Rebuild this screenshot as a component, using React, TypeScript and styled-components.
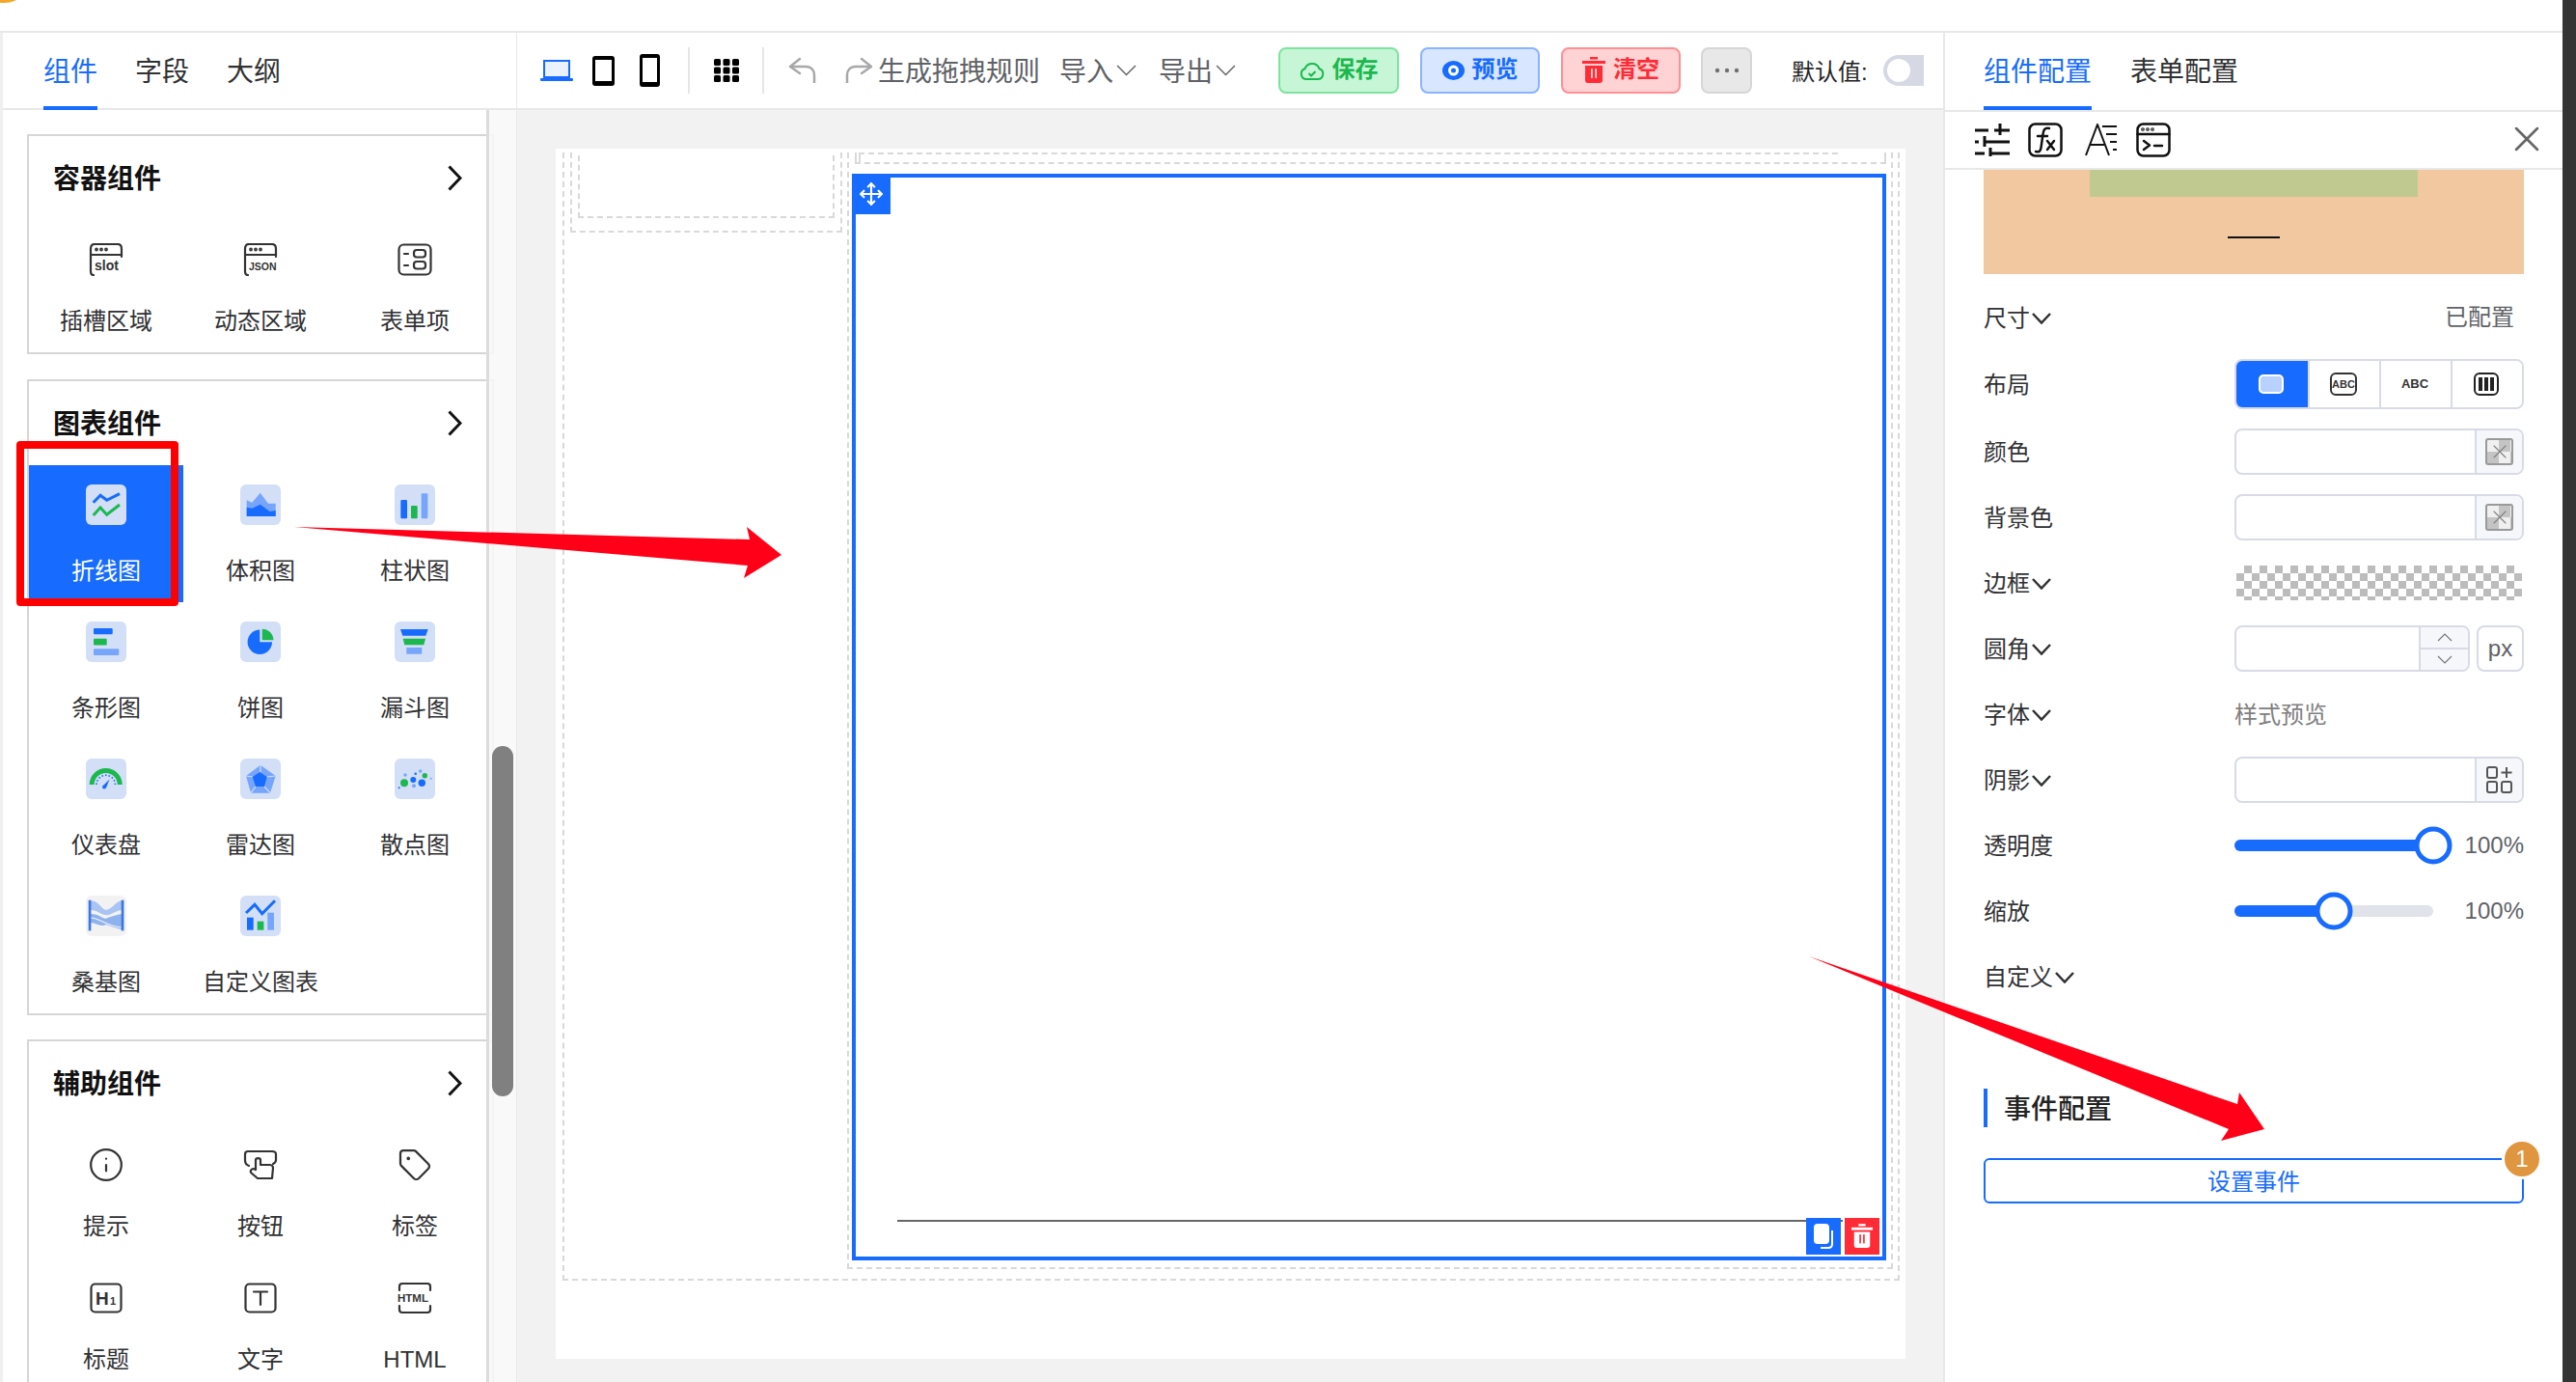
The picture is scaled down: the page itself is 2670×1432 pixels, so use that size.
import type { ReactNode } from 'react'
import styled, { createGlobalStyle } from 'styled-components'
import { Info, Move, Tag, X } from 'lucide-react'

const BLUE = '#176cff'
const GREEN = '#1cb84f'
const LIGHT = '#76a5fb'
const LINE = '#e8e8e8'
const INK = '#303133'

const GlobalStyle = createGlobalStyle`
  html, body {
    margin: 0;
    padding: 0;
    background: #fff;
  }
  * {
    box-sizing: border-box;
  }
  body {
    font-family: "Liberation Sans", "Noto Sans CJK SC", sans-serif;
    color: ${INK};
  }
`

const Tile = ({ children, $bg = '#d3dff6' }: { children: ReactNode; $bg?: string }) => (
  <svg width="42" height="42" viewBox="0 0 42 42">
    <rect width="42" height="42" rx="6" fill={$bg} />
    {children}
  </svg>
)

const LineChartIcon = () => (
  <Tile>
    <g fill="none" strokeWidth="3">
      <polyline points="7.7,18.7 15,11.3 21.7,16.3 35,9.7" stroke={BLUE} />
      <polyline points="7.7,32 15,24 21.7,31.3 35,21" stroke={GREEN} />
    </g>
  </Tile>
)

const AreaIcon = () => (
  <Tile>
    <polygon points="6.7,16.3 12.3,18.7 20.7,8.7 29,19.7 36.7,19.7 36.7,33 6.7,33" fill={LIGHT} />
    <polygon points="6.7,23.7 12.3,24.7 20.7,20.7 30.7,28 36.7,27 36.7,33 6.7,33" fill={BLUE} />
  </Tile>
)

const BarIcon = () => (
  <Tile>
    <rect x="6.3" y="16" width="6.7" height="19.3" rx="1" fill={BLUE} />
    <rect x="17" y="22" width="6.7" height="13.3" rx="1" fill={GREEN} />
    <rect x="27.7" y="9.3" width="6.7" height="26" rx="1" fill={LIGHT} />
  </Tile>
)

const HBarIcon = () => (
  <Tile>
    <rect x="8" y="7" width="19.7" height="6.3" rx="1" fill={BLUE} />
    <rect x="8" y="17.7" width="13.7" height="6.7" rx="1" fill={GREEN} />
    <rect x="8" y="28.3" width="26.3" height="6.7" rx="1" fill={LIGHT} />
  </Tile>
)

const PieIcon = () => (
  <Tile>
    <path d="M20.3 21.3V8.6A12.7 12.7 0 1 0 33 21.3Z" fill={BLUE} />
    <path d="M22.7 7.7A11.7 11.7 0 0 1 34.4 19.3H22.7Z" fill={GREEN} />
  </Tile>
)

const FunnelIcon = () => (
  <Tile>
    <polygon points="6,8 34.7,8 32.3,14.7 8.3,14.7" fill={BLUE} />
    <polygon points="8.7,17.7 32,17.7 30.3,24.3 10.3,24.3" fill={GREEN} />
    <rect x="12.3" y="27" width="16" height="6.7" fill={LIGHT} />
  </Tile>
)

const GaugeIcon = () => (
  <Tile>
    <path d="M6.2 27A14.5 14.5 0 0 1 35.2 27" fill="none" stroke={GREEN} strokeWidth="5" />
    <path d="M11 27A9.7 9.7 0 0 1 30.4 27" fill="none" stroke={BLUE} strokeWidth="1.6" strokeDasharray="1.6 2" />
    <path d="M24.5 21.5L21 30.5L18 28Z" fill={BLUE} />
    <circle cx="19" cy="29.5" r="2" fill={BLUE} />
  </Tile>
)

const RadarIcon = () => (
  <Tile>
    <polygon points="21,6.7 36.7,18 31,35.7 11,35.7 6,18" fill={LIGHT} />
    <g stroke="#d3dff6" strokeWidth="1.2">
      <line x1="21" y1="6.7" x2="21" y2="14" />
      <line x1="36.7" y1="18" x2="27.7" y2="19" />
      <line x1="31" y1="35.7" x2="25" y2="29" />
      <line x1="11" y1="35.7" x2="16" y2="29" />
      <line x1="6" y1="18" x2="12.7" y2="19" />
    </g>
    <polygon points="20.3,14 27.7,19 25,29 16,29 12.7,19" fill={BLUE} />
  </Tile>
)

const ScatterIcon = () => (
  <Tile>
    <circle cx="10" cy="25.3" r="4" fill={GREEN} />
    <circle cx="19.3" cy="22" r="3" fill={BLUE} />
    <circle cx="28.3" cy="25.3" r="3.7" fill={BLUE} />
    <circle cx="31.3" cy="17.7" r="2.7" fill={GREEN} />
    <circle cx="20" cy="28.3" r="2" fill={LIGHT} />
    <circle cx="26.7" cy="13" r="1.7" fill={LIGHT} />
    <circle cx="21.7" cy="15.7" r="1.3" fill={BLUE} />
    <circle cx="11" cy="17" r="1.7" fill={LIGHT} />
    <circle cx="4.7" cy="30.3" r="1" fill={BLUE} />
    <circle cx="37.7" cy="20.7" r="1" fill={LIGHT} />
  </Tile>
)

const SankeyIcon = () => (
  <Tile $bg="#f2f2f2">
    <path d="M5 5C14 6 16 14 21 15C27 14 30 7 37 5V15C29 16 26 21 20 20C14 19 12 15 5 15Z" fill="#a9c3f2" />
    <path d="M5 19C12 19 15 22 20 24C25 22 31 20 37 19V35C28 33 25 31 21 30C15 33 10 28 5 28Z" fill="#8fb2ee" />
    <path d="M5 23C14 23 22 32 37 33" fill="none" stroke="#f2f2f2" strokeWidth="1.2" />
    <rect x="2.7" y="4.7" width="2.7" height="31.7" fill="#3b78e6" />
    <rect x="36.7" y="4.7" width="2.7" height="31.7" fill="#3b78e6" />
  </Tile>
)

const CustomChartIcon = () => (
  <Tile>
    <polyline points="6,18 15,9.3 22.7,18.7 36,5.3" fill="none" stroke={BLUE} strokeWidth="3" />
    <rect x="7" y="22.7" width="6.7" height="13" fill={BLUE} />
    <rect x="17.7" y="26.7" width="6.7" height="9" fill={GREEN} />
    <rect x="28.3" y="17.7" width="6.7" height="18" fill={LIGHT} />
  </Tile>
)

const Stroke = styled.svg`
  display: block;
  fill: none;
  stroke: #333;
  stroke-width: 2.2;
  stroke-linecap: round;
  stroke-linejoin: round;
  flex: none;
`

const IconText = styled.text<{ $size: number; $weight?: number }>`
  font-family: "Liberation Sans", sans-serif;
  font-size: ${(p) => p.$size}px;
  font-weight: ${(p) => p.$weight ?? 700};
  fill: #333;
  stroke: none;
`

const WindowIcon = ({ word, size }: { word: string; size: number }) => (
  <Stroke width="36" height="34" viewBox="0 0 36 34">
    <path d="M5 33C3 33 2 31 2 29V6C2 3 3 1 6 1H30C33 1 34 3 34 6V14" />
    <line x1="2" y1="12" x2="34" y2="12" />
    <circle cx="8" cy="6.5" r=".8" />
    <circle cx="13" cy="6.5" r=".8" />
    <circle cx="18" cy="6.5" r=".8" />
    <IconText x="6" y="28" $size={size}>
      {word}
    </IconText>
  </Stroke>
)

const FormIcon = () => (
  <Stroke width="36" height="34" viewBox="0 0 36 34">
    <rect x="1.5" y="1.5" width="33" height="31" rx="5" />
    <line x1="7" y1="11" x2="11" y2="11" />
    <line x1="7" y1="23" x2="11" y2="23" />
    <rect x="17" y="7" width="12" height="7.5" rx="3" />
    <rect x="17" y="19" width="12" height="7.5" rx="3" />
  </Stroke>
)

const PressIcon = () => (
  <Stroke width="36" height="34" viewBox="0 0 36 34">
    <path d="M6 18C3 17 2 15 2 12V6C2 4 3 3 5 3H30C32 3 34 4 34 6V12C34 14 33 15 31 16" />
    <path d="M13 22V12C13 9.5 18 9.5 18 12V17H28C30 17 31 19 31 20L30 31H15L8 25C7 22 10 20 13 22Z" />
  </Stroke>
)

const HeadingIcon = () => (
  <Stroke width="34" height="32" viewBox="0 0 34 32">
    <rect x="1.5" y="1.5" width="31" height="29" rx="4" />
    <IconText x="6" y="23" $size={19}>
      H
    </IconText>
    <IconText x="21" y="23" $size={11}>
      1
    </IconText>
  </Stroke>
)

const TextIcon = () => (
  <Stroke width="34" height="32" viewBox="0 0 34 32">
    <rect x="1.5" y="1.5" width="31" height="29" rx="4" />
    <path d="M10 9.5H24M17 9.5V23" />
  </Stroke>
)

const HtmlIcon = () => (
  <Stroke width="36" height="34" viewBox="0 0 36 34">
    <path d="M2 9V5C2 3 3 2 5 2H31C33 2 34 3 34 5V9" />
    <path d="M2 25V29C2 31 3 32 5 32H31C33 32 34 31 34 29V25" />
    <IconText x="0" y="21" $size={11.5}>
      HTML
    </IconText>
  </Stroke>
)

const Chevron = styled.svg`
  display: block;
  flex: none;
  fill: none;
  stroke: ${(p) => p.color || INK};
`

const DownArrow = ({ width = 20, thin = false }: { width?: number; thin?: boolean }) => (
  <Chevron width={width} height="12" viewBox="0 0 20 12" preserveAspectRatio="none" color={thin ? '#606266' : INK} strokeWidth={thin ? 1.3 : 2.5}>
    <polyline points="1,1 10,10.5 19,1" />
  </Chevron>
)

const Page = styled.div`
  position: relative;
  display: flex;
  width: 2670px;
  height: 1432px;
  overflow: hidden;
  background: #fff;
`

const Main = styled.div`
  display: flex;
  flex-direction: column;
  width: 2656px;
  height: 100%;
`

const DarkEdge = styled.div`
  width: 14px;
  background: #343434;
`

const TopStrip = styled.div`
  position: relative;
  height: 34px;
  flex: none;
  background: #fff;
  border-bottom: 2px solid ${LINE};
`

const CornerBlob = styled.div`
  position: absolute;
  left: -12px;
  top: -12px;
  width: 32px;
  height: 15px;
  border-radius: 50%;
  background: #f5a623;
`

const Workspace = styled.div`
  display: flex;
  flex: 1;
  min-height: 0;
`

const LeftPanel = styled.aside`
  display: flex;
  flex-direction: column;
  width: 536px;
  flex: none;
  border-left: 3px solid #efefef;
  border-right: 1px solid ${LINE};
  background: #fff;
`

const TabBar = styled.div<{ $gap: number; $pad: number; $h: number }>`
  display: flex;
  gap: ${(p) => p.$gap}px;
  height: ${(p) => p.$h}px;
  padding-left: ${(p) => p.$pad}px;
  flex: none;
  border-bottom: 2px solid ${LINE};
`

const TabItem = styled.div<{ $active?: boolean; $h: number }>`
  height: ${(p) => p.$h}px;
  line-height: 81px;
  font-size: 28px;
  color: ${(p) => (p.$active ? BLUE : INK)};
  border-bottom: 4px solid ${(p) => (p.$active ? BLUE : 'transparent')};
`

const Palette = styled.div`
  position: relative;
  flex: 1;
  min-height: 0;
  overflow: hidden;
  padding: 25px 0 0 25px;
`

const PaletteCard = styled.section<{ $mb: number }>`
  width: 484px;
  margin-bottom: ${(p) => p.$mb}px;
  border: 2px solid #d6d6d6;
`

const CardHead = styled.div`
  display: flex;
  align-items: center;
  justify-content: space-between;
  height: 86px;
  padding: 0 31px 0 25px;
  font-size: 28px;
  line-height: 34px;
  font-weight: 700;
  color: #111;
`

const CardTitle = styled.span`
  padding-top: 3px;
`

const CardChevron = () => (
  <Chevron width="15" height="27" viewBox="0 0 15 27" color="#111" strokeWidth="3">
    <polyline points="1.5,1.5 13,13.5 1.5,25.5" />
  </Chevron>
)

const ItemGrid = styled.div<{ $top?: number }>`
  display: grid;
  grid-template-columns: repeat(3, 160px);
  margin-top: ${(p) => p.$top ?? 0}px;
`

const PaletteItem = styled.div<{ $pad: number; $gap: number; $active?: boolean }>`
  display: flex;
  flex-direction: column;
  align-items: center;
  padding: ${(p) => p.$pad}px 0 15px;
  gap: ${(p) => p.$gap}px;
  background: ${(p) => (p.$active ? BLUE : 'transparent')};
  color: ${(p) => (p.$active ? '#fff' : INK)};
`

const ItemIcon = styled.div`
  display: flex;
  align-items: center;
  justify-content: center;
  height: 42px;
`

const ItemLabel = styled.div`
  font-size: 24px;
  line-height: 34px;
  white-space: nowrap;
`

const ScrollTrack = styled.div`
  position: absolute;
  top: 0;
  bottom: 0;
  right: 0;
  width: 31px;
  background: rgba(248, 248, 248, 0.88);
  border-left: 3px solid #dcdcdc;
`

const ScrollThumb = styled.div`
  position: absolute;
  top: 659px;
  left: 3px;
  width: 22px;
  height: 363px;
  border-radius: 11px;
  background: #808080;
`

const Center = styled.main`
  display: flex;
  flex-direction: column;
  width: 1478px;
  flex: none;
  background: #f2f2f2;
`

const Toolbar = styled.div`
  display: flex;
  align-items: center;
  height: 80px;
  flex: none;
  background: #fff;
  border-bottom: 2px solid ${LINE};
  font-size: 28px;
  color: #606266;
`

const Slot = styled.div<{ $gap: number }>`
  display: flex;
  align-items: center;
  margin-left: ${(p) => p.$gap}px;
  flex: none;
`

const ToolDivider = styled.div<{ $gap: number }>`
  width: 2px;
  height: 48px;
  margin-left: ${(p) => p.$gap}px;
  background: #e6e6e6;
  flex: none;
`

const ToolText = styled.span`
  padding-top: 3px;
  line-height: 40px;
  white-space: nowrap;
`

const ActionButton = styled.div<{ $bg: string; $line: string; $fg: string; $width: number }>`
  display: flex;
  align-items: center;
  justify-content: center;
  gap: 8px;
  width: ${(p) => p.$width}px;
  height: 48px;
  border: 2px solid ${(p) => p.$line};
  border-radius: 8px;
  background: ${(p) => p.$bg};
  color: ${(p) => p.$fg};
  font-size: 24px;
  font-weight: 600;
`

const ActionLabel = styled.span`
  padding-bottom: 3px;
  line-height: 34px;
`

const DefaultLabel = styled.span`
  padding-top: 3px;
  font-size: 24px;
  line-height: 34px;
  color: #222;
  white-space: nowrap;
`

const Toggle = styled.div`
  display: flex;
  align-items: center;
  width: 42px;
  height: 32px;
  padding-left: 4px;
  border-radius: 16px 0 0 16px;
  background: #d6d9e4;
`

const ToggleKnob = styled.div`
  width: 24px;
  height: 24px;
  border-radius: 50%;
  background: #fff;
`

const Stage = styled.div`
  flex: 1;
  min-height: 0;
  padding: 40px 0 0 40px;
`

const Sheet = styled.div`
  width: 1399px;
  height: 1254px;
  padding: 4px 6px 0 7px;
  background: #fff;
`

const DASH = '2px dashed #d9d9d9'

const OuterZone = styled.div`
  display: flex;
  align-items: flex-start;
  height: 1169px;
  padding-left: 6px;
  border-left: ${DASH};
  border-right: ${DASH};
  border-bottom: ${DASH};
`

const SideZone = styled.div`
  width: 282px;
  height: 83px;
  padding: 3px 6px 0;
  flex: none;
  border-left: ${DASH};
  border-right: ${DASH};
  border-bottom: ${DASH};
`

const SideInner = styled.div`
  height: 65px;
  border-left: ${DASH};
  border-right: ${DASH};
  border-bottom: ${DASH};
`

const BodyZone = styled.div`
  width: 1084px;
  height: 1157px;
  margin-left: 5px;
  flex: none;
  border-left: ${DASH};
  border-right: ${DASH};
  border-bottom: ${DASH};
`

const TopSlot = styled.div`
  width: 1069px;
  height: 12px;
  margin-left: 6px;
  border-left: ${DASH};
  border-right: ${DASH};
  border-bottom: ${DASH};
`

const TopSlotInner = styled.div`
  width: 1015px;
  height: 10px;
  margin-left: 2px;
  border-left: ${DASH};
  border-top: ${DASH};
`

const SelectedWidget = styled.div`
  position: relative;
  display: flex;
  flex-direction: column;
  justify-content: flex-end;
  width: 1072px;
  height: 1126px;
  margin: 10px 0 0 3px;
  border: 4px solid ${BLUE};
`

const WidgetRule = styled.div`
  width: 980px;
  height: 2px;
  margin: 0 0 36px 43px;
  background: #666;
`

const MoveHandle = styled.div`
  position: absolute;
  left: -4px;
  top: -4px;
  display: flex;
  align-items: center;
  justify-content: center;
  width: 40px;
  height: 42px;
  background: ${BLUE};
`

const WidgetAction = styled.div<{ $right: number; $bg: string }>`
  position: absolute;
  right: ${(p) => p.$right}px;
  bottom: 2px;
  display: flex;
  align-items: center;
  justify-content: center;
  width: 36px;
  height: 38px;
  background: ${(p) => p.$bg};
`

const RightPanel = styled.aside`
  display: flex;
  flex-direction: column;
  width: 642px;
  flex: none;
  border-left: 2px solid ${LINE};
  background: #fff;
`

const ConfigIcons = styled.div`
  display: flex;
  align-items: center;
  height: 60px;
  padding: 0 15px 0 31px;
  flex: none;
  border-bottom: 2px solid ${LINE};
`

const ConfigIconSlot = styled.div<{ $gap?: number }>`
  margin-left: ${(p) => p.$gap ?? 0}px;
`

const CloseSlot = styled.div`
  display: flex;
  margin: -3px 0 0 auto;
  color: #666;
`

const ConfigBody = styled.div`
  flex: 1;
  min-height: 0;
  padding: 0 40px;
`

const BoxPreview = styled.div`
  display: flex;
  flex-direction: column;
  align-items: center;
  height: 108px;
  margin-bottom: 11px;
  background: #f1c8a0;
`

const BoxPreviewInner = styled.div`
  width: 340px;
  height: 28px;
  background: #c0c98f;
`

const BoxPreviewLine = styled.div`
  width: 54px;
  height: 2px;
  margin-top: 41px;
  background: #111;
`

const Row = styled.div<{ $mt?: number }>`
  display: flex;
  align-items: center;
  height: 68px;
  margin-top: ${(p) => p.$mt ?? 0}px;
`

const RowLabel = styled.div`
  display: flex;
  align-items: center;
  gap: 2px;
  width: 260px;
  padding-top: 1px;
  flex: none;
  font-size: 24px;
  line-height: 34px;
  color: ${INK};
`

const RowControl = styled.div`
  display: flex;
  align-items: center;
  width: 300px;
  font-size: 24px;
  line-height: 34px;
`

const HintRight = styled.div`
  width: 100%;
  padding-right: 10px;
  text-align: right;
  color: #606266;
`

const HintLeft = styled.div`
  padding-top: 2px;
  color: #808080;
`

const Segmented = styled.div`
  display: grid;
  grid-template-columns: repeat(4, 1fr);
  width: 100%;
  height: 52px;
  border: 2px solid #d8dbe6;
  border-radius: 8px;
  overflow: hidden;
`

const SegmentCell = styled.div<{ $active?: boolean }>`
  display: flex;
  align-items: center;
  justify-content: center;
  padding-right: 3px;
  background: ${(p) => (p.$active ? BLUE : '#fff')};
  border-left: 2px solid ${(p) => (p.$active ? BLUE : '#d8dbe6')};
  &:first-child {
    border-left: none;
  }
`

const InputBox = styled.div<{ $width?: number }>`
  display: flex;
  justify-content: flex-end;
  width: ${(p) => p.$width ?? 300}px;
  height: 48px;
  border: 2px solid #d8dbe6;
  border-radius: 8px;
  overflow: hidden;
  flex: none;
`

const InputAddon = styled.div<{ $width: number }>`
  display: flex;
  flex-direction: column;
  align-items: center;
  justify-content: center;
  width: ${(p) => p.$width}px;
  background: #f5f7fa;
  border-left: 2px solid #d8dbe6;
`

const StepperHalf = styled.div`
  display: flex;
  flex: 1;
  align-items: center;
  justify-content: center;
  width: 100%;
  & + & {
    border-top: 2px solid #d8dbe6;
  }
`

const UnitBox = styled.div`
  display: flex;
  align-items: center;
  justify-content: center;
  width: 49px;
  height: 48px;
  margin-left: 7px;
  border: 2px solid #d8dbe6;
  border-radius: 8px;
  color: #606266;
`

const Checker = styled.div`
  width: 296px;
  height: 36px;
  margin-left: 2px;
  background: repeating-conic-gradient(#bcbcbc 0 25%, #fff 0 50%) 0 0 / 16px 16px;
`

const Swatch = styled.div`
  display: flex;
  align-items: center;
  justify-content: center;
  width: 29px;
  height: 28px;
  border: 2px solid #9a9a9a;
  border-radius: 3px;
  background: repeating-conic-gradient(#c4c4c4 0 25%, #f0f0f0 0 50%) 0 0 / 24px 24px;
  color: #808080;
`

const SliderTrack = styled.div`
  position: relative;
  width: 206px;
  height: 12px;
  border-radius: 6px;
  background: #e0e3ea;
  flex: none;
`

const SliderFill = styled.div<{ $value: number }>`
  width: ${(p) => p.$value}%;
  height: 100%;
  border-radius: 6px;
  background: ${BLUE};
`

const SliderThumb = styled.div<{ $value: number }>`
  position: absolute;
  left: ${(p) => p.$value}%;
  top: 50%;
  width: 39px;
  height: 39px;
  transform: translate(-50%, -50%);
  border: 5px solid ${BLUE};
  border-radius: 50%;
  background: #fff;
`

const SliderValue = styled.div`
  margin-left: auto;
  color: #606266;
`

const EventTitle = styled.div`
  height: 40px;
  margin-top: 82px;
  padding-left: 17px;
  border-left: 4px solid ${BLUE};
  font-size: 28px;
  line-height: 43px;
  font-weight: 500;
  color: #222;
`

const EventButton = styled.div`
  position: relative;
  height: 47px;
  margin-top: 32px;
  border: 2px solid ${BLUE};
  border-radius: 6px;
  text-align: center;
  font-size: 24px;
  line-height: 45px;
  color: ${BLUE};
`

const EventBadge = styled.div`
  position: absolute;
  right: -21px;
  top: -22px;
  width: 42px;
  height: 42px;
  border: 3px solid #fff;
  border-radius: 50%;
  background: #e0963f;
  color: #fff;
  font-size: 24px;
  line-height: 36px;
`

const Highlight = styled.div`
  position: absolute;
  left: 17px;
  top: 457px;
  width: 168px;
  height: 171px;
  border: 8px solid #ff0000;
  border-radius: 4px;
  pointer-events: none;
`

const ArrowLayer = styled.svg`
  position: absolute;
  left: 0;
  top: 0;
  pointer-events: none;
`

interface PaletteEntry {
  label: string
  icon: ReactNode
  active?: boolean
}

const containerItems: PaletteEntry[] = [
  { label: '插槽区域', icon: <WindowIcon word="slot" size={14} /> },
  { label: '动态区域', icon: <WindowIcon word="JSON" size={10.5} /> },
  { label: '表单项', icon: <FormIcon /> },
]

const chartItems: PaletteEntry[] = [
  { label: '折线图', icon: <LineChartIcon />, active: true },
  { label: '体积图', icon: <AreaIcon /> },
  { label: '柱状图', icon: <BarIcon /> },
  { label: '条形图', icon: <HBarIcon /> },
  { label: '饼图', icon: <PieIcon /> },
  { label: '漏斗图', icon: <FunnelIcon /> },
  { label: '仪表盘', icon: <GaugeIcon /> },
  { label: '雷达图', icon: <RadarIcon /> },
  { label: '散点图', icon: <ScatterIcon /> },
  { label: '桑基图', icon: <SankeyIcon /> },
  { label: '自定义图表', icon: <CustomChartIcon /> },
]

const helperItems: PaletteEntry[] = [
  { label: '提示', icon: <Info size={38} strokeWidth={1.4} color="#333" /> },
  { label: '按钮', icon: <PressIcon /> },
  { label: '标签', icon: <Tag size={36} strokeWidth={1.5} color="#333" /> },
  { label: '标题', icon: <HeadingIcon /> },
  { label: '文字', icon: <TextIcon /> },
  { label: 'HTML', icon: <HtmlIcon /> },
]

const PaletteSection = ({
  title,
  items,
  chart = false,
}: {
  title: string
  items: PaletteEntry[]
  chart?: boolean
}) => (
  <PaletteCard $mb={chart ? 25 : 26}>
    <CardHead>
      <CardTitle>{title}</CardTitle>
      <CardChevron />
    </CardHead>
    <ItemGrid $top={chart ? 1 : 0}>
      {items.map((item) => (
        <PaletteItem key={item.label} $pad={chart ? 20 : 21} $gap={chart ? 31 : 26} $active={item.active}>
          <ItemIcon>{item.icon}</ItemIcon>
          <ItemLabel>{item.label}</ItemLabel>
        </PaletteItem>
      ))}
    </ItemGrid>
  </PaletteCard>
)

const LaptopIcon = () => (
  <svg width="34" height="24" viewBox="0 0 34 24" fill="none">
    <rect x="4" y="2" width="26" height="17" fill="#eaf1ff" stroke={BLUE} strokeWidth="2" />
    <rect x="0" y="20" width="34" height="3" rx="1" fill={BLUE} />
  </svg>
)

const PhoneIcon = ({ width, height }: { width: number; height: number }) => (
  <svg width={width} height={height} viewBox={`0 0 ${width} ${height}`}>
    <rect x="0" y="0" width={width} height={height} rx="3" fill="#000" />
    <rect x="3" y="4" width={width - 6} height={height - 9} fill="#fff" />
  </svg>
)

const GridIcon = () => (
  <svg width="26" height="24" viewBox="0 0 26 24" fill="#000">
    {[0, 9.5, 19].map((x) =>
      [0, 8.5, 17].map((y) => <rect key={`${x}-${y}`} x={x} y={y} width="7" height="7" rx="1.5" />),
    )}
  </svg>
)

const UndoIcon = ({ flip = false }: { flip?: boolean }) => (
  <svg width="29" height="28" viewBox="0 0 29 28" fill="none" stroke="#a8a8a8" strokeWidth="2.5">
    <g transform={flip ? 'translate(29 0) scale(-1 1)' : undefined}>
      <path d="M12 2L2 10L12 17" strokeLinecap="round" strokeLinejoin="round" />
      <path d="M2 10H18C24 10 27 14 27 19V27" />
    </g>
  </svg>
)

const CloudIcon = () => (
  <svg width="26" height="24" viewBox="0 0 26 24" fill="none" stroke={GREEN} strokeWidth="2">
    <path d="M7 21A5.5 5.5 0 0 1 5.5 10.3A8 8 0 0 1 20.5 10.3A5.5 5.5 0 0 1 19 21Z" />
    <path d="M9.5 15L12 17.5L16.5 13" />
  </svg>
)

const EyeIcon = () => (
  <svg width="23" height="24" viewBox="0 0 23 24">
    <ellipse cx="11.5" cy="12" rx="11.5" ry="10" fill={BLUE} />
    <circle cx="11.5" cy="12" r="5.5" fill="#fff" />
    <circle cx="11.5" cy="12" r="2.5" fill={BLUE} />
  </svg>
)

const TrashIcon = ({ color, cut = '#fff', size = 24 }: { color: string; cut?: string; size?: number }) => (
  <svg width={size} height={size + 4} viewBox="0 0 24 28">
    <rect x="8" y="0" width="8" height="2.5" fill={color} />
    <rect x="0" y="4" width="24" height="3" fill={color} />
    <path d="M3 9H21V24C21 26 20 27 18 27H6C4 27 3 26 3 24Z" fill={color} />
    <rect x="9" y="12" width="1.8" height="10" fill={cut} />
    <rect x="13.2" y="12" width="1.8" height="10" fill={cut} />
  </svg>
)

const DotsIcon = () => (
  <svg width="26" height="6" viewBox="0 0 26 6" fill="#707070">
    <circle cx="3" cy="3" r="2.2" />
    <circle cx="13" cy="3" r="2.2" />
    <circle cx="23" cy="3" r="2.2" />
  </svg>
)

const CopyIcon = () => (
  <svg width="22" height="28" viewBox="0 0 22 28" fill="none">
    <rect x="1" y="1" width="16" height="21" rx="4" fill="#fff" />
    <path d="M20 8V22C20 25 18 26 16 26H8" stroke="#fff" strokeWidth="2" />
  </svg>
)

const SlidersIcon = () => (
  <Stroke width="36" height="34" viewBox="0 0 36 34" style={{ stroke: '#111', strokeWidth: 3, strokeLinecap: 'butt' }}>
    <path d="M0 7H14M20 7H36M26 0V12" />
    <path d="M0 19H4M10 19H36M10 13V24" />
    <path d="M0 31H10M16 31H36M16 25V34" />
  </Stroke>
)

const FxIcon = () => (
  <Stroke width="36" height="36" viewBox="0 0 36 36" style={{ stroke: '#111', strokeWidth: 2.5 }}>
    <rect x="1.5" y="1.5" width="33" height="33" rx="6" />
    <path d="M22 6C17 5 16 8 15.5 12L13.5 26C13 30 11 31 8 30M10 14H20" />
    <path d="M20 19L27 28M27 19L20 28" />
  </Stroke>
)

const FontStyleIcon = () => (
  <Stroke width="34" height="34" viewBox="0 0 34 34" style={{ stroke: '#111', strokeWidth: 2, strokeLinecap: 'butt' }}>
    <path d="M1 33L13 1L25 33M6 22H20" />
    <path d="M18 3H33M22 11H33M26 19H33M29 27H33" />
  </Stroke>
)

const TerminalIcon = () => (
  <Stroke width="36" height="36" viewBox="0 0 36 36" style={{ stroke: '#111', strokeWidth: 2.5 }}>
    <rect x="1.5" y="1.5" width="33" height="33" rx="6" />
    <line x1="1.5" y1="12" x2="34.5" y2="12" />
    <circle cx="7" cy="7" r=".6" />
    <circle cx="12" cy="7" r=".6" />
    <circle cx="17" cy="7" r=".6" />
    <path d="M8 19L14 23.5L8 28M19 24H27" />
  </Stroke>
)

const LayoutBlockIcon = () => (
  <svg width="26" height="20" viewBox="0 0 26 20">
    <rect x="1" y="1" width="24" height="18" rx="4" fill="#b9d1ff" stroke="#fff" strokeWidth="2" />
  </svg>
)

const LayoutAbcIcon = ({ boxed }: { boxed: boolean }) => (
  <svg width="28" height="24" viewBox="0 0 28 24" fill="none">
    {boxed && <rect x="1" y="1" width="26" height="22" rx="5" stroke="#333" strokeWidth="2" />}
    <IconText x="14" y="16" textAnchor="middle" $size={boxed ? 11 : 13}>
      ABC
    </IconText>
  </svg>
)

const LayoutBarsIcon = () => (
  <svg width="26" height="24" viewBox="0 0 26 24" fill="none">
    <rect x="1" y="1" width="24" height="22" rx="5" stroke="#222" strokeWidth="2" />
    <rect x="5" y="5" width="4" height="14" fill="#222" />
    <rect x="11" y="5" width="4" height="14" fill="#222" />
    <rect x="17" y="5" width="4" height="14" fill="#222" />
  </svg>
)

const ShadowPresetIcon = () => (
  <Stroke width="27" height="28" viewBox="0 0 27 28" style={{ stroke: '#555', strokeWidth: 2, strokeLinecap: 'butt' }}>
    <rect x="1" y="1" width="10" height="11" rx="2" />
    <rect x="1" y="16" width="10" height="11" rx="2" />
    <rect x="16" y="16" width="10" height="11" rx="2" />
    <path d="M21 1V12M15.5 6.5H26.5" />
  </Stroke>
)

const StepArrow = ({ up = false }: { up?: boolean }) => (
  <svg width="16" height="9" viewBox="0 0 16 9" fill="none" stroke="#777" strokeWidth="1.2">
    <polyline points={up ? '1,8 8,1 15,8' : '1,1 8,8 15,1'} />
  </svg>
)

const ColorInput = () => (
  <InputBox>
    <InputAddon $width={49}>
      <Swatch>
        <X size={24} strokeWidth={1.1} />
      </Swatch>
    </InputAddon>
  </InputBox>
)

const SliderRow = ({ label, value }: { label: string; value: number }) => (
  <Row>
    <RowLabel>{label}</RowLabel>
    <RowControl>
      <SliderTrack>
        <SliderFill $value={value} />
        <SliderThumb $value={value} />
      </SliderTrack>
      <SliderValue>100%</SliderValue>
    </RowControl>
  </Row>
)

export default function App() {
  return (
    <Page>
      <GlobalStyle />
      <Main>
        <TopStrip>
          <CornerBlob />
        </TopStrip>
        <Workspace>
          <LeftPanel>
            <TabBar $gap={39} $pad={42} $h={80}>
              <TabItem $active $h={80}>组件</TabItem>
              <TabItem $h={80}>字段</TabItem>
              <TabItem $h={80}>大纲</TabItem>
            </TabBar>
            <Palette>
              <PaletteSection title="容器组件" items={containerItems} />
              <PaletteSection title="图表组件" items={chartItems} chart />
              <PaletteSection title="辅助组件" items={helperItems} />
              <ScrollTrack>
                <ScrollThumb />
              </ScrollTrack>
            </Palette>
          </LeftPanel>

          <Center>
            <Toolbar>
              <Slot $gap={24}><LaptopIcon /></Slot>
              <Slot $gap={20}><PhoneIcon width={23} height={31} /></Slot>
              <Slot $gap={26}><PhoneIcon width={21} height={34} /></Slot>
              <ToolDivider $gap={29} />
              <Slot $gap={25}><GridIcon /></Slot>
              <ToolDivider $gap={24} />
              <Slot $gap={25}><UndoIcon /></Slot>
              <Slot $gap={30}><UndoIcon flip /></Slot>
              <Slot $gap={5}><ToolText>生成拖拽规则</ToolText></Slot>
              <Slot $gap={20}><ToolText>导入</ToolText></Slot>
              <Slot $gap={3}><DownArrow width={21} thin /></Slot>
              <Slot $gap={23}><ToolText>导出</ToolText></Slot>
              <Slot $gap={3}><DownArrow width={21} thin /></Slot>
              <Slot $gap={44}>
                <ActionButton $bg="#c6f6d5" $line="#7fe3a0" $fg={GREEN} $width={125}>
                  <CloudIcon />
                  <ActionLabel>保存</ActionLabel>
                </ActionButton>
              </Slot>
              <Slot $gap={22}>
                <ActionButton $bg="#d9e6ff" $line="#8ab3ff" $fg={BLUE} $width={124}>
                  <EyeIcon />
                  <ActionLabel>预览</ActionLabel>
                </ActionButton>
              </Slot>
              <Slot $gap={22}>
                <ActionButton $bg="#ffd3d3" $line="#ff8f95" $fg="#ff2b36" $width={124}>
                  <TrashIcon color="#ff2b36" cut="#ffd3d3" />
                  <ActionLabel>清空</ActionLabel>
                </ActionButton>
              </Slot>
              <Slot $gap={21}>
                <ActionButton $bg="#e8e8e8" $line="#d6d6d6" $fg="#707070" $width={53}>
                  <DotsIcon />
                </ActionButton>
              </Slot>
              <Slot $gap={41}><DefaultLabel>默认值:</DefaultLabel></Slot>
              <Slot $gap={16}>
                <Toggle>
                  <ToggleKnob />
                </Toggle>
              </Slot>
            </Toolbar>
            <Stage>
              <Sheet>
                <OuterZone>
                  <SideZone>
                    <SideInner />
                  </SideZone>
                  <BodyZone>
                    <TopSlot>
                      <TopSlotInner />
                    </TopSlot>
                    <SelectedWidget>
                      <MoveHandle>
                        <Move size={26} color="#fff" strokeWidth={2} />
                      </MoveHandle>
                      <WidgetRule />
                      <WidgetAction $right={43} $bg={BLUE}>
                        <CopyIcon />
                      </WidgetAction>
                      <WidgetAction $right={3} $bg="#ff2b36">
                        <TrashIcon color="#fff" cut="#ff2b36" size={22} />
                      </WidgetAction>
                    </SelectedWidget>
                  </BodyZone>
                </OuterZone>
              </Sheet>
            </Stage>
          </Center>

          <RightPanel>
            <TabBar $gap={40} $pad={40} $h={82}>
              <TabItem $active $h={80}>组件配置</TabItem>
              <TabItem $h={80}>表单配置</TabItem>
            </TabBar>
            <ConfigIcons>
              <ConfigIconSlot><SlidersIcon /></ConfigIconSlot>
              <ConfigIconSlot $gap={19}><FxIcon /></ConfigIconSlot>
              <ConfigIconSlot $gap={23}><FontStyleIcon /></ConfigIconSlot>
              <ConfigIconSlot $gap={19}><TerminalIcon /></ConfigIconSlot>
              <CloseSlot>
                <X size={44} strokeWidth={1.4} />
              </CloseSlot>
            </ConfigIcons>
            <ConfigBody>
              <BoxPreview>
                <BoxPreviewInner />
                <BoxPreviewLine />
              </BoxPreview>
              <Row>
                <RowLabel>尺寸<DownArrow /></RowLabel>
                <RowControl><HintRight>已配置</HintRight></RowControl>
              </Row>
              <Row $mt={1}>
                <RowLabel>布局</RowLabel>
                <RowControl>
                  <Segmented>
                    <SegmentCell $active><LayoutBlockIcon /></SegmentCell>
                    <SegmentCell><LayoutAbcIcon boxed /></SegmentCell>
                    <SegmentCell><LayoutAbcIcon boxed={false} /></SegmentCell>
                    <SegmentCell><LayoutBarsIcon /></SegmentCell>
                  </Segmented>
                </RowControl>
              </Row>
              <Row $mt={2}>
                <RowLabel>颜色</RowLabel>
                <RowControl><ColorInput /></RowControl>
              </Row>
              <Row>
                <RowLabel>背景色</RowLabel>
                <RowControl><ColorInput /></RowControl>
              </Row>
              <Row>
                <RowLabel>边框<DownArrow /></RowLabel>
                <RowControl><Checker /></RowControl>
              </Row>
              <Row>
                <RowLabel>圆角<DownArrow /></RowLabel>
                <RowControl>
                  <InputBox $width={244}>
                    <InputAddon $width={51}>
                      <StepperHalf><StepArrow up /></StepperHalf>
                      <StepperHalf><StepArrow /></StepperHalf>
                    </InputAddon>
                  </InputBox>
                  <UnitBox>px</UnitBox>
                </RowControl>
              </Row>
              <Row>
                <RowLabel>字体<DownArrow /></RowLabel>
                <RowControl><HintLeft>样式预览</HintLeft></RowControl>
              </Row>
              <Row>
                <RowLabel>阴影<DownArrow /></RowLabel>
                <RowControl>
                  <InputBox>
                    <InputAddon $width={49}><ShadowPresetIcon /></InputAddon>
                  </InputBox>
                </RowControl>
              </Row>
              <SliderRow label="透明度" value={100} />
              <SliderRow label="缩放" value={50} />
              <Row>
                <RowLabel>自定义<DownArrow /></RowLabel>
              </Row>
              <EventTitle>事件配置</EventTitle>
              <EventButton>
                设置事件
                <EventBadge>1</EventBadge>
              </EventButton>
            </ConfigBody>
          </RightPanel>
        </Workspace>
      </Main>
      <DarkEdge />
      <Highlight />
      <ArrowLayer width="2670" height="1432" viewBox="0 0 2670 1432" fill="#ff0018">
        <polygon points="305,546 777,559 774,546 810,575 771,599 775,586" />
        <polygon points="1875,991 2319,1144 2321,1132 2347,1170 2302,1182 2310,1170" />
      </ArrowLayer>
    </Page>
  )
}
